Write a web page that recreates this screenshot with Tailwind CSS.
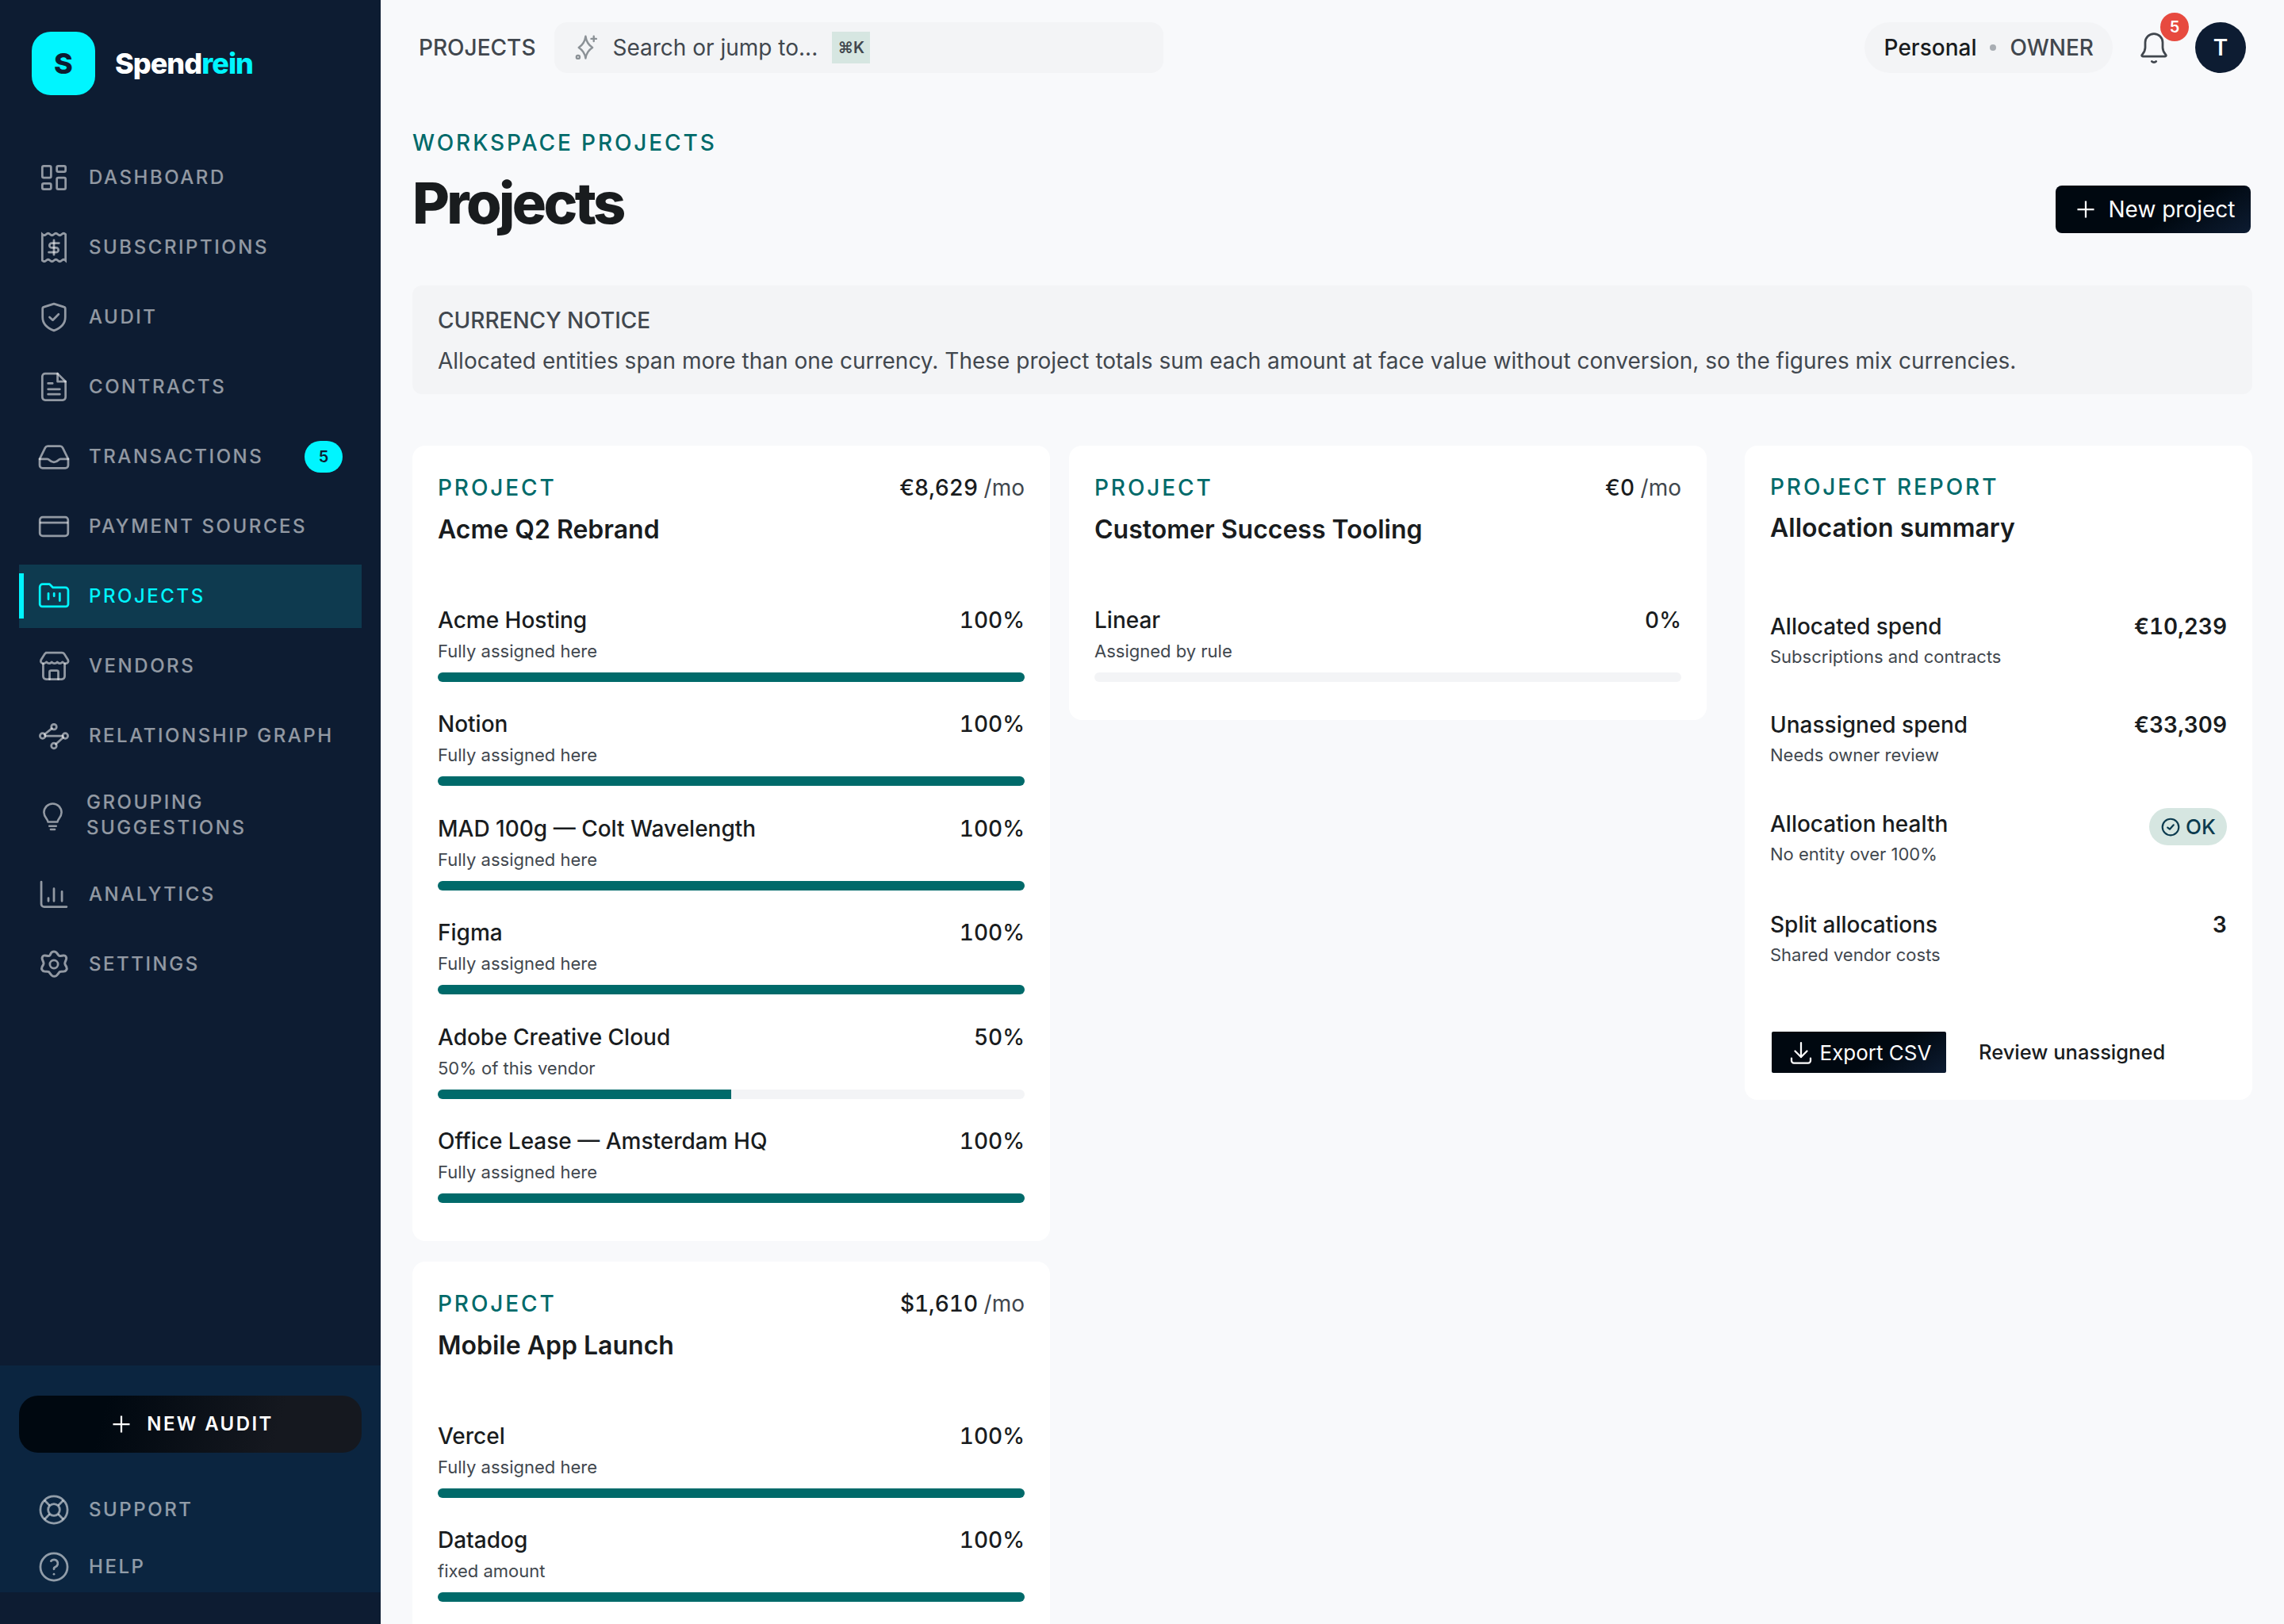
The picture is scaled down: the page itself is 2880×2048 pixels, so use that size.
<!DOCTYPE html>
<html lang="en">
<head>
<meta charset="utf-8">
<title>Projects</title>
<script src="https://cdn.jsdelivr.net/npm/@tailwindcss/browser@4"></script>
</head>
<body class="m-0 bg-[#f8f9fb] font-['Inter',sans-serif] text-[#191c1e]">
<div class="flex h-[2048px] w-[2880px] overflow-hidden">

<aside class="flex h-full w-[480px] shrink-0 flex-col bg-[#0d1c32]">
  <div class="flex h-[160px] shrink-0 items-center gap-[25px] pl-[40px]">
    <div class="flex h-[80px] w-[80px] items-center justify-center rounded-[24px] bg-[#00f5ff] text-[36px] font-extrabold text-[#0d1c32]">S</div>
    <div class="text-[36px] font-extrabold tracking-[-1px] text-white">Spend<span class="text-[#00f5ff]">rein</span></div>
  </div>
  <nav class="mt-[24px] flex flex-col gap-[8px] px-[24px] text-[24px] font-medium tracking-[2.55px] text-white/55">
    <a class="flex min-h-[80px] items-center gap-[22px] px-[22px]"><svg class="h-[44px] w-[44px] shrink-0" viewBox="0 0 24 24" fill="none" stroke="currentColor" stroke-width="1.5"><path d="M5 4h4a1 1 0 0 1 1 1v6a1 1 0 0 1 -1 1h-4a1 1 0 0 1 -1 -1v-6a1 1 0 0 1 1 -1"/><path d="M5 16h4a1 1 0 0 1 1 1v2a1 1 0 0 1 -1 1h-4a1 1 0 0 1 -1 -1v-2a1 1 0 0 1 1 -1"/><path d="M15 12h4a1 1 0 0 1 1 1v6a1 1 0 0 1 -1 1h-4a1 1 0 0 1 -1 -1v-6a1 1 0 0 1 1 -1"/><path d="M15 4h4a1 1 0 0 1 1 1v2a1 1 0 0 1 -1 1h-4a1 1 0 0 1 -1 -1v-2a1 1 0 0 1 1 -1"/></svg>DASHBOARD</a>
    <a class="flex min-h-[80px] items-center gap-[22px] px-[22px]"><svg class="h-[44px] w-[44px] shrink-0" viewBox="0 0 24 24" fill="none" stroke="currentColor" stroke-width="1.5" stroke-linecap="round"><path d="M4 3q1.33 1.3 2.67 0t2.67 0t2.66 0t2.67 0t2.67 0t2.66 0V21q-1.33 -1.3 -2.66 0t-2.67 0t-2.67 0t-2.66 0t-2.67 0t-2.67 0Z"/><path d="M15.5 9h-5a1.5 1.5 0 0 0 0 3.2h3a1.5 1.5 0 0 1 0 3.2h-5"/><path d="M12 7v10"/></svg>SUBSCRIPTIONS</a>
    <a class="flex min-h-[80px] items-center gap-[22px] px-[22px]"><svg class="h-[44px] w-[44px] shrink-0" viewBox="0 0 24 24" fill="none" stroke="currentColor" stroke-width="1.5" stroke-linecap="round" stroke-linejoin="round"><path d="M12 2.800l6.900 2.200a1.200 1.200 0 0 1 .9 1.200V12c0 4.600 -3.400 7.600 -7.800 9.200C7.600 19.600 4.200 16.600 4.200 12V6.200a1.200 1.200 0 0 1 .9 -1.200Z"/><path d="M9 12l2.200 2l4 -4"/></svg>AUDIT</a>
    <a class="flex min-h-[80px] items-center gap-[22px] px-[22px]"><svg class="h-[44px] w-[44px] shrink-0" viewBox="0 0 24 24" fill="none" stroke="currentColor" stroke-width="1.5" stroke-linecap="round" stroke-linejoin="round"><path d="M6 2.800h8.500l5.500 5.500V19a2 2 0 0 1 -2 2H6a2 2 0 0 1 -2 -2V4.800a2 2 0 0 1 2 -2Z"/><path d="M14.500 2.800v5.500H20"/><path d="M8 9.500h3M8 13.500h8M8 17h8"/></svg>CONTRACTS</a>
    <a class="flex min-h-[80px] items-center gap-[22px] px-[22px]"><svg class="h-[44px] w-[44px] shrink-0" viewBox="0 0 24 24" fill="none" stroke="currentColor" stroke-width="1.5" stroke-linecap="round" stroke-linejoin="round"><path d="M2.200 13.500L6 5.800a2 2 0 0 1 1.800 -1.100h8.400a2 2 0 0 1 1.800 1.100l3.800 7.700v4.300a2 2 0 0 1 -2 2H4.200a2 2 0 0 1 -2 -2Z"/><path d="M2.200 13.500h5.300c1.500 0 1.500 2.200 4.500 2.200s3 -2.200 4.500 -2.200h5.300"/></svg><span class="flex-1">TRANSACTIONS</span><span class="mr-[2px] flex h-[40px] w-[48px] items-center justify-center rounded-full bg-[#00f5ff] text-[20px] font-semibold tracking-normal text-[#0d1c32]">5</span></a>
    <a class="flex min-h-[80px] items-center gap-[22px] px-[22px]"><svg class="h-[44px] w-[44px] shrink-0" viewBox="0 0 24 24" fill="none" stroke="currentColor" stroke-width="1.5"><rect x="2.300" y="5.500" width="19.400" height="13" rx="2"/><path d="M2.300 9.300h19.400"/></svg>PAYMENT SOURCES</a>
    <a class="relative flex min-h-[80px] items-center gap-[22px] bg-[#0e3a4f] px-[22px] text-[#00f5ff]"><span class="absolute top-[11px] left-0 h-[57px] w-[6px] bg-[#00f5ff]"></span><svg class="h-[44px] w-[44px] shrink-0" viewBox="0 0 24 24" fill="none" stroke="currentColor" stroke-width="1.5" stroke-linecap="round" stroke-linejoin="round"><path d="M4.300 3.600h4.700l2.200 2.300h8.600a2 2 0 0 1 2 2v9.400a1.700 1.700 0 0 1 -1.700 1.700H4a1.700 1.700 0 0 1 -1.700 -1.700V5.600a2 2 0 0 1 2 -2Z"/><path d="M8.200 10v4M12.100 10v1.800M16 10v5"/></svg>PROJECTS</a>
    <a class="flex min-h-[80px] items-center gap-[22px] px-[22px]"><svg class="h-[44px] w-[44px] shrink-0" viewBox="0 0 24 24" fill="none" stroke="currentColor" stroke-width="1.5" stroke-linecap="round" stroke-linejoin="round"><path d="M6.500 2.800h11a2 2 0 0 1 1.600 .8l2.600 4.200a1.700 1.700 0 0 1 -1.300 2.400c-1.200 .2 -2 -.8 -2.600 -1c-1 1.200 -2.600 1.300 -3.500 0c-1 1.300 -2.800 1.300 -3.800 0c-.9 1.300 -2.500 1.200 -3.500 0c-.6 .2 -1.400 1.200 -2.600 1a1.700 1.700 0 0 1 -1.300 -2.400l2.600 -4.200a2 2 0 0 1 1.600 -.8Z"/><path d="M4.600 10.500V19a2 2 0 0 0 2 2h10.800a2 2 0 0 0 2 -2v-8.500"/><path d="M9 21v-5a1 1 0 0 1 1 -1h4a1 1 0 0 1 1 1v5"/></svg>VENDORS</a>
    <a class="flex min-h-[80px] items-center gap-[22px] px-[22px]"><svg class="h-[44px] w-[44px] shrink-0" viewBox="0 0 24 24" fill="none" stroke="currentColor" stroke-width="1.5" stroke-linecap="round"><circle cx="12" cy="5.800" r="1.800"/><circle cx="4.200" cy="12" r="1.800"/><circle cx="19.800" cy="12" r="1.800"/><circle cx="12" cy="18.800" r="1.800"/><path d="M5.600 10.900l5 -4M6 12h12M18.400 13.100l-5 4.500"/></svg>RELATIONSHIP GRAPH</a>
    <a class="flex min-h-[80px] items-center gap-[22px] px-[22px] py-[20px] leading-[32px]"><svg class="h-[44px] w-[41px] shrink-0" viewBox="0 0 24 24" fill="none" stroke="currentColor" stroke-width="1.5" stroke-linecap="round" stroke-linejoin="round"><path d="M8.500 17c0 -2 -3 -3.500 -3 -7a6.500 6.500 0 0 1 13 0c0 3.500 -3 5 -3 7h-7Z"/><path d="M9.500 20h5M10.500 22.500h3"/></svg><span class="w-[280px]">GROUPING SUGGESTIONS</span></a>
    <a class="flex min-h-[80px] items-center gap-[22px] px-[22px]"><svg class="h-[44px] w-[44px] shrink-0" viewBox="0 0 24 24" fill="none" stroke="currentColor" stroke-width="1.5" stroke-linecap="round" stroke-linejoin="round"><path d="M3.300 3.300V18.500a2 2 0 0 0 2 2H20.700"/><path d="M8.200 14.500v2M12 8v8.500M17.500 10v6.500"/></svg>ANALYTICS</a>
    <a class="flex min-h-[80px] items-center gap-[22px] px-[22px]"><svg class="h-[44px] w-[44px] shrink-0" viewBox="0 0 24 24" fill="none" stroke="currentColor" stroke-width="1.5" stroke-linejoin="round"><path d="M10.300 3.300c.8 -1 2.600 -1 3.400 0l1.200 1.500c.3 .4 .8 .6 1.300 .5l1.900 -.3c1.300 -.2 2.200 1.300 1.700 2.500l-.7 1.800c-.2 .5 -.2 1 0 1.400l.9 1.700c.6 1.200 -.3 2.800 -1.700 2.800l-1.900 .1c-.5 0 -1 .3 -1.200 .7l-1.300 1.600c-.8 1 -2.600 1 -3.400 0l-1.300 -1.600c-.2 -.4 -.7 -.7 -1.200 -.7l-1.900 -.1c-1.400 0 -2.300 -1.600 -1.700 -2.800l.9 -1.700c.2 -.4 .2 -.9 0 -1.400l-.7 -1.800c-.5 -1.200 .4 -2.700 1.700 -2.500l1.900 .3c.5 .1 1 -.1 1.300 -.5Z" transform="translate(12 12) scale(1.08) translate(-12 -10.600)"/><circle cx="12" cy="12" r="2.800"/></svg>SETTINGS</a>
  </nav>
  <div class="mt-auto mb-[40px] flex h-[286px] shrink-0 flex-col bg-[#0b2540] px-[24px] pt-[38px]">
    <button class="flex h-[72px] w-[432px] shrink-0 items-center justify-center gap-[14px] rounded-[24px] bg-[linear-gradient(105deg,#000810_25%,#15181f_75%)] text-[24px] font-semibold tracking-[2.4px] text-white"><svg class="h-[36px] w-[36px]" viewBox="0 0 24 24" fill="none" stroke="currentColor" stroke-width="1.5"><path d="M12 5v14M5 12h14"/></svg>NEW AUDIT</button>
    <div class="mt-[50px] flex flex-col gap-[28px] px-[22px] text-[24px] font-medium tracking-[2.55px] text-white/55">
      <a class="flex h-[44px] items-center gap-[22px]"><svg class="h-[44px] w-[44px] shrink-0" viewBox="0 0 24 24" fill="none" stroke="currentColor" stroke-width="1.5"><circle cx="12" cy="12" r="9.300"/><circle cx="12" cy="12" r="4"/><path d="M15 15l3.500 3.500M9 15l-3.500 3.500M5.500 5.500L9 9M18.500 5.500L15 9"/></svg>SUPPORT</a>
      <a class="flex h-[44px] items-center gap-[22px]"><svg class="h-[44px] w-[44px] shrink-0" viewBox="0 0 24 24" fill="none" stroke="currentColor" stroke-width="1.5" stroke-linecap="round"><circle cx="12" cy="12" r="9.300"/><path d="M12 17v.01"/><path d="M12 13.500a1.500 1.500 0 0 1 1 -1.500a2.600 2.600 0 1 0 -3 -4"/></svg>HELP</a>
    </div>
  </div>
</aside>

<main class="flex min-w-0 flex-1 flex-col">
  <header class="flex h-[120px] shrink-0 items-center pr-[48px] pl-[48px]">
    <div class="text-[28px] font-medium text-[#41474e]">PROJECTS</div>
    <div class="ml-[24px] flex h-[64px] w-[768px] items-center rounded-[16px] bg-[#f3f4f6] pl-[22px]">
      <svg class="h-[38px] w-[38px]" viewBox="0 0 24 24" fill="none" stroke="#8b9196" stroke-width="1.500" stroke-linecap="round" stroke-linejoin="round"><path d="M11 3c.6 4.500 2.300 7 5.500 9c-3.200 2 -4.900 4.500 -5.500 8.500c-.6 -4 -2.300 -6.500 -5.500 -8.500c3.200 -2 4.900 -4.500 5.500 -9Z"/><path d="M17.500 3v4M15.500 5h4"/><circle cx="5" cy="19.500" r="1.300"/></svg>
      <span class="ml-[13px] text-[28px] text-[#41474e]">Search or jump to...</span>
      <span class="ml-[18px] flex h-[40px] w-[48px] items-center justify-center bg-[#d6e6e1] text-[20px] font-semibold text-[#41474e]">⌘K</span>
    </div>
    <div class="ml-auto flex h-[64px] items-center rounded-full bg-[#f3f4f6] pr-[24px] pl-[25px] text-[28px]">
      <span class="font-medium text-[#191c1e]">Personal</span><span class="mx-[17px] h-[8px] w-[8px] rounded-full bg-[#a8adb3]"></span><span class="font-medium text-[#41474e]">OWNER</span>
    </div>
    <div class="relative ml-[30px] h-[64px] w-[44px]">
      <svg class="absolute top-[10px] left-[0px] h-[44px] w-[44px]" viewBox="0 0 24 24" fill="none" stroke="#41474e" stroke-width="1.500" stroke-linecap="round" stroke-linejoin="round"><path d="M12 2.500a6 6 0 0 1 6 6v3.500c0 2.500 1.200 3.800 2.200 5c.4 .5 .1 1 -.5 1H4.300c-.6 0 -.9 -.5 -.5 -1c1 -1.200 2.200 -2.500 2.200 -5V8.500a6 6 0 0 1 6 -6Z"/><path d="M10.500 21.500a2 2 0 0 0 3 0"/></svg>
      <span class="absolute top-[-12px] left-[30px] flex h-[36px] w-[36px] items-center justify-center rounded-full bg-[#e74a3f] text-[20px] font-semibold text-white">5</span>
    </div>
    <div class="ml-[30px] flex h-[64px] w-[64px] shrink-0 items-center justify-center rounded-full bg-[#0d1c32] text-[28px] font-semibold text-white">T</div>
  </header>

  <div class="flex flex-col pr-[40px] pl-[40px]">
    <div class="flex items-start justify-between pt-[40px]">
      <div>
        <div class="text-[28px] leading-[40px] font-medium tracking-[2.9px] text-[#006a6a]">WORKSPACE PROJECTS</div>
        <h1 class="mt-[16px] text-[72px] leading-[80px] font-extrabold tracking-[-3.6px] text-[#191c1e]">Projects</h1>
      </div>
      <button class="mt-[74px] mr-[2px] flex h-[60px] w-[246px] items-center justify-center gap-[11px] rounded-[8px] bg-[linear-gradient(150deg,#000810_60%,#0d1c32_100%)] text-[28px] text-white"><svg class="h-[36px] w-[36px]" viewBox="0 0 24 24" fill="none" stroke="currentColor" stroke-width="1.500"><path d="M12 5v14M5 12h14"/></svg>New project</button>
    </div>

    <div class="mt-[64px] h-[137px] rounded-[12px] bg-[#f3f4f6] px-[32px] pt-[24px]">
      <div class="text-[28px] leading-[40px] font-medium text-[#41474e]">CURRENCY NOTICE</div>
      <div class="mt-[11px] text-[28px] leading-[40px] text-[#41474e]">Allocated entities span more than one currency. These project totals sum each amount at face value without conversion, so the figures mix currencies.</div>
    </div>

    <div class="mt-[65px] flex items-start gap-[48px]">
      <div class="grid w-[1632px] shrink-0 grid-cols-2 items-start gap-[24px]">
        <div class="flex flex-col gap-[26px]">

          <section class="rounded-[16px] bg-white px-[32px] pt-[32px] pb-[48px]">
            <div class="flex items-center justify-between"><span class="text-[28px] leading-[40px] font-medium tracking-[2.9px] text-[#006a6a]">PROJECT</span><span class="text-[28px] font-medium tabular-nums">€8,629 <span class="font-normal text-[#41474e]">/mo</span></span></div>
            <h2 class="mt-[10px] text-[32px] leading-[44px] font-semibold">Acme Q2 Rebrand</h2>
            <div class="mt-[72px] flex flex-col gap-[33.4px]">
              <div><div class="flex h-[40px] items-center justify-between text-[28px] leading-[40px] font-[450]"><span>Acme Hosting</span><span class="font-medium tabular-nums">100%</span></div><div class="mt-[3px] text-[22px] leading-[32px] text-[#41474e]">Fully assigned here</div><div class="mt-[11px] h-[12px] rounded-full bg-[#006a6a]"></div></div>
              <div><div class="flex h-[40px] items-center justify-between text-[28px] leading-[40px] font-[450]"><span>Notion</span><span class="font-medium tabular-nums">100%</span></div><div class="mt-[3px] text-[22px] leading-[32px] text-[#41474e]">Fully assigned here</div><div class="mt-[11px] h-[12px] rounded-full bg-[#006a6a]"></div></div>
              <div><div class="flex h-[40px] items-center justify-between text-[28px] leading-[40px] font-[450]"><span>MAD 100g — Colt Wavelength</span><span class="font-medium tabular-nums">100%</span></div><div class="mt-[3px] text-[22px] leading-[32px] text-[#41474e]">Fully assigned here</div><div class="mt-[11px] h-[12px] rounded-full bg-[#006a6a]"></div></div>
              <div><div class="flex h-[40px] items-center justify-between text-[28px] leading-[40px] font-[450]"><span>Figma</span><span class="font-medium tabular-nums">100%</span></div><div class="mt-[3px] text-[22px] leading-[32px] text-[#41474e]">Fully assigned here</div><div class="mt-[11px] h-[12px] rounded-full bg-[#006a6a]"></div></div>
              <div><div class="flex h-[40px] items-center justify-between text-[28px] leading-[40px] font-[450]"><span>Adobe Creative Cloud</span><span class="font-medium tabular-nums">50%</span></div><div class="mt-[3px] text-[22px] leading-[32px] text-[#41474e]">50% of this vendor</div><div class="mt-[11px] h-[12px] overflow-hidden rounded-full bg-[#f3f4f6]"><div class="h-full w-1/2 bg-[#006a6a]"></div></div></div>
              <div><div class="flex h-[40px] items-center justify-between text-[28px] leading-[40px] font-[450]"><span>Office Lease — Amsterdam HQ</span><span class="font-medium tabular-nums">100%</span></div><div class="mt-[3px] text-[22px] leading-[32px] text-[#41474e]">Fully assigned here</div><div class="mt-[11px] h-[12px] rounded-full bg-[#006a6a]"></div></div>
            </div>
          </section>

          <section class="rounded-[16px] bg-white px-[32px] pt-[32px] pb-[48px]">
            <div class="flex items-center justify-between"><span class="text-[28px] leading-[40px] font-medium tracking-[2.9px] text-[#006a6a]">PROJECT</span><span class="text-[28px] font-medium tabular-nums">$1,610 <span class="font-normal text-[#41474e]">/mo</span></span></div>
            <h2 class="mt-[10px] text-[32px] leading-[44px] font-semibold">Mobile App Launch</h2>
            <div class="mt-[72px] flex flex-col gap-[33.4px]">
              <div><div class="flex h-[40px] items-center justify-between text-[28px] leading-[40px] font-[450]"><span>Vercel</span><span class="font-medium tabular-nums">100%</span></div><div class="mt-[3px] text-[22px] leading-[32px] text-[#41474e]">Fully assigned here</div><div class="mt-[11px] h-[12px] rounded-full bg-[#006a6a]"></div></div>
              <div><div class="flex h-[40px] items-center justify-between text-[28px] leading-[40px] font-[450]"><span>Datadog</span><span class="font-medium tabular-nums">100%</span></div><div class="mt-[3px] text-[22px] leading-[32px] text-[#41474e]">fixed amount</div><div class="mt-[11px] h-[12px] rounded-full bg-[#006a6a]"></div></div>
            </div>
          </section>
        </div>

        <section class="rounded-[16px] bg-white px-[32px] pt-[32px] pb-[48px]">
          <div class="flex items-center justify-between"><span class="text-[28px] leading-[40px] font-medium tracking-[2.9px] text-[#006a6a]">PROJECT</span><span class="text-[28px] font-medium tabular-nums">€0 <span class="font-normal text-[#41474e]">/mo</span></span></div>
          <h2 class="mt-[10px] text-[32px] leading-[44px] font-semibold">Customer Success Tooling</h2>
          <div class="mt-[72px]">
            <div class="flex h-[40px] items-center justify-between text-[28px] leading-[40px] font-[450]"><span>Linear</span><span class="font-medium tabular-nums">0%</span></div><div class="mt-[3px] text-[22px] leading-[32px] text-[#41474e]">Assigned by rule</div><div class="mt-[11px] h-[12px] rounded-full bg-[#f3f4f6]"></div>
          </div>
        </section>
      </div>

      <section class="h-[825px] w-[640px] shrink-0 rounded-[16px] bg-white px-[32px] pt-[32px]">
        <div class="text-[28px] leading-[40px] font-medium tracking-[2.9px] text-[#006a6a]">PROJECT REPORT</div>
        <h2 class="mt-[10px] text-[32px] leading-[44px] font-semibold">Allocation summary</h2>
        <div class="mt-[82px]">
          <div class="flex items-start justify-between"><div><div class="text-[28px] leading-[40px] font-medium">Allocated spend</div><div class="mt-[2px] text-[22px] leading-[32px] text-[#41474e]">Subscriptions and contracts</div></div><div class="text-[28px] leading-[40px] font-semibold tabular-nums">€10,239</div></div>
          <div class="mt-[50px] flex items-start justify-between"><div><div class="text-[28px] leading-[40px] font-medium">Unassigned spend</div><div class="mt-[2px] text-[22px] leading-[32px] text-[#41474e]">Needs owner review</div></div><div class="text-[28px] leading-[40px] font-semibold tabular-nums">€33,309</div></div>
          <div class="mt-[51px] flex items-start justify-between"><div><div class="text-[28px] leading-[40px] font-medium">Allocation health</div><div class="mt-[2px] text-[22px] leading-[32px] text-[#41474e]">No entity over 100%</div></div><div class="flex h-[47px] w-[98px] items-center justify-center gap-[6px] rounded-full bg-[#d6e6e1] text-[26px] font-medium text-[#0b3a4e]"><svg class="h-[26px] w-[26px]" viewBox="0 0 24 24" fill="none" stroke="currentColor" stroke-width="2" stroke-linecap="round" stroke-linejoin="round"><circle cx="12" cy="12" r="9.500"/><path d="M8.500 12.500l2.500 2l4.500 -5"/></svg>OK</div></div>
          <div class="mt-[53px] flex items-start justify-between"><div><div class="text-[28px] leading-[40px] font-medium">Split allocations</div><div class="mt-[2px] text-[22px] leading-[32px] text-[#41474e]">Shared vendor costs</div></div><div class="text-[28px] leading-[40px] font-semibold tabular-nums">3</div></div>
        </div>
        <div class="mt-[81px] flex items-center">
          <button class="ml-[2px] flex h-[52px] w-[220px] items-center justify-center gap-[6px] rounded-[2px] bg-[linear-gradient(150deg,#000810_60%,#0d1c32_100%)] text-[26px] text-white"><svg class="h-[36px] w-[36px]" viewBox="0 0 24 24" fill="none" stroke="currentColor" stroke-width="1.500" stroke-linecap="round" stroke-linejoin="round"><path d="M4 17v2a2 2 0 0 0 2 2h12a2 2 0 0 0 2 -2v-2"/><path d="M7 11l5 5l5 -5"/><path d="M12 4v12"/></svg>Export CSV</button>
          <span class="ml-[41px] text-[25.5px] font-medium">Review unassigned</span>
        </div>
      </section>
    </div>
  </div>
</main>
</div>
</body>
</html>
